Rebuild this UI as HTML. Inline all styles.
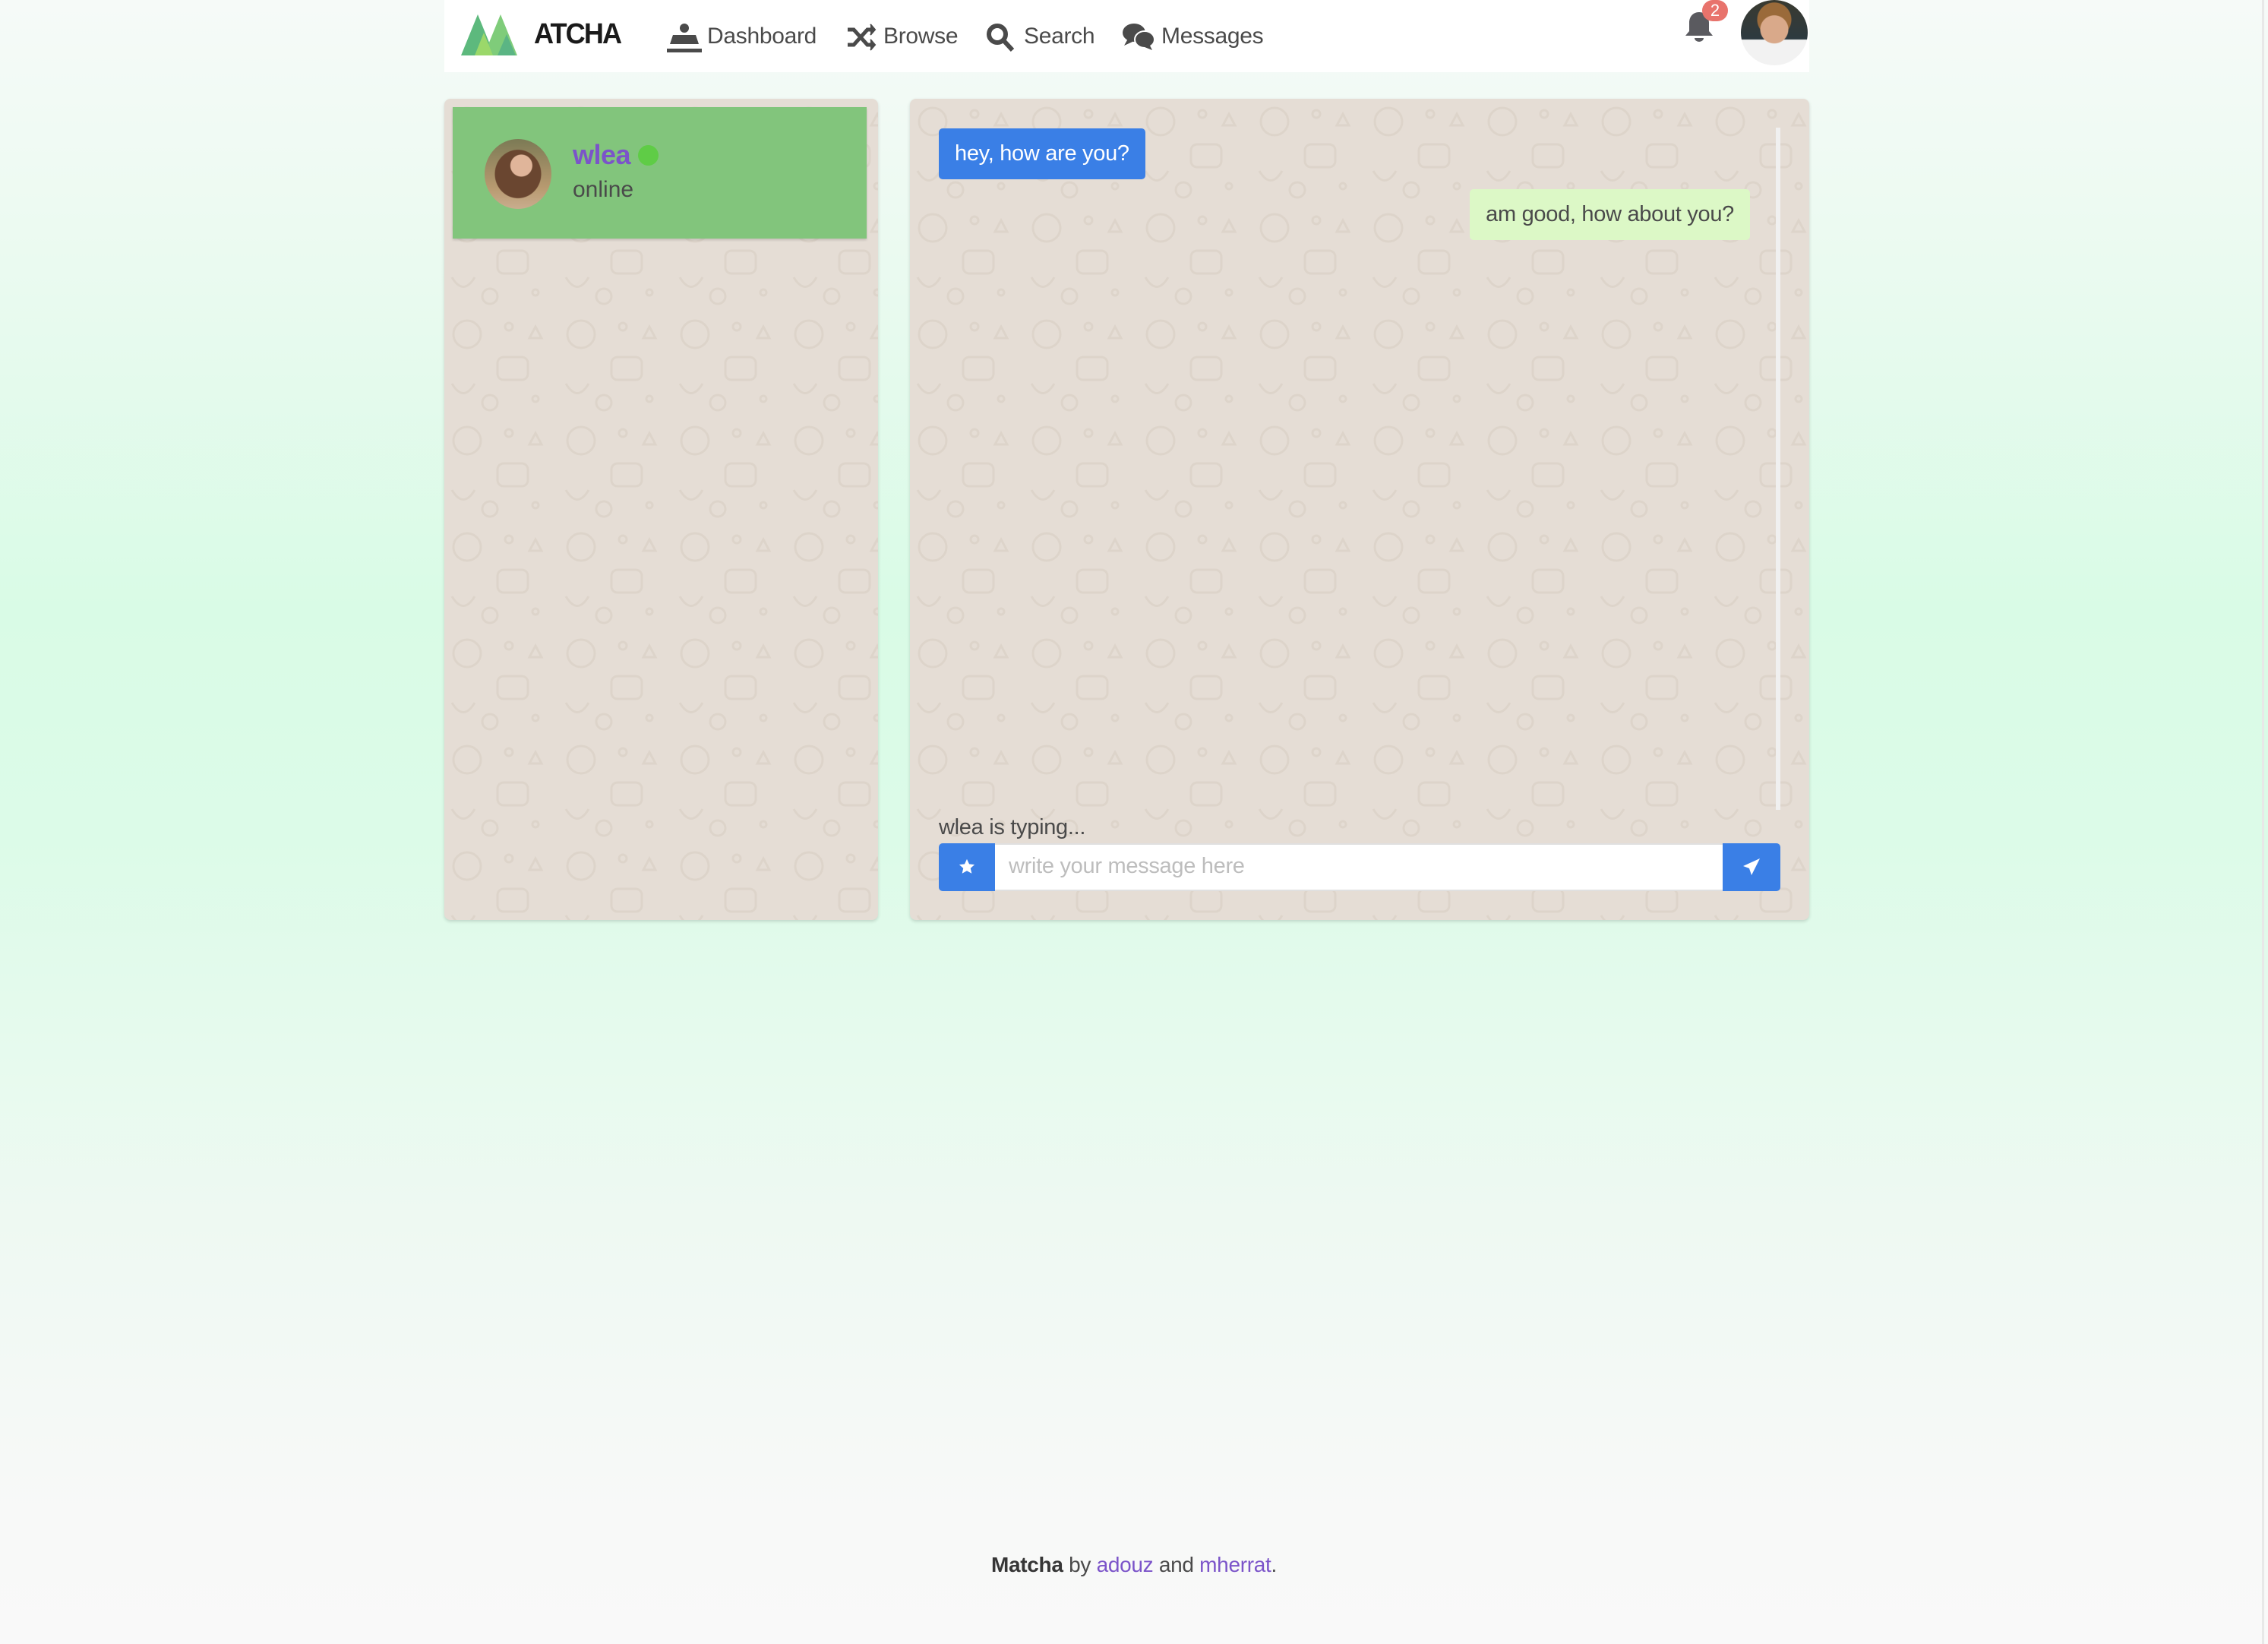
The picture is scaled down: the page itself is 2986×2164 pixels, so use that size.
<!DOCTYPE html>
<html><head><meta charset="utf-8">
<style>
*{margin:0;padding:0;box-sizing:border-box}
html,body{width:2986px;height:2164px;overflow:hidden}
body{font-family:"Liberation Sans",sans-serif;color:#4a4a4a;position:relative;
background:linear-gradient(180deg,#f6faf8 0px,#ecfaf1 300px,#d9fbe6 800px,#dcfbe8 1100px,#eef9f2 1600px,#f8f9f8 2000px,#f9f9f9 2164px);}
.nav{position:absolute;left:585px;top:0;width:1797px;height:95px;background:#fff}
.ni{position:absolute;top:28px;font-size:30px;color:#4a4a4a;line-height:40px;letter-spacing:-0.3px}
.ni svg{position:absolute;left:0;top:2px}
.panel{position:absolute;background-color:#e5ddd5;border-radius:8px;box-shadow:0 2px 4px rgba(0,0,0,.15);overflow:hidden}
.pat{position:absolute;inset:0;opacity:.35}
.card{position:absolute;left:11px;top:11px;width:545px;height:173px;background:#82c57c;box-shadow:0 2px 3px rgba(0,0,0,.15)}
.bub{position:absolute;height:67px;line-height:67px;font-size:29px;padding:0 21px;border-radius:5px;white-space:nowrap;letter-spacing:-0.3px}
</style></head><body>
<div class="nav">
  <svg style="position:absolute;left:22px;top:19px" width="100" height="54" viewBox="0 0 100 54">
    <polygon points="0,54 22,0 44,54" fill="#5db97d"/>
    <polygon points="30,54 52,0 74,54" fill="#7fcc7a"/>
    <polygon points="18,54 30,24 42,54" fill="#9bd86a"/>
    <polygon points="48,54 60,26 72,54" fill="#5bb584"/>
  </svg>
  <div style="position:absolute;left:118px;top:24px;font-size:38px;font-weight:bold;color:#1a1a1a;letter-spacing:-2px;transform:scaleX(0.95);transform-origin:left">ATCHA</div>
  <div class="ni" style="left:293px;padding-left:53px"><svg width="46" height="40" viewBox="0 0 46 40" fill="#4a4a4a"><circle cx="23" cy="7" r="6"/><path d="M8 16h30l4 12H4z"/><rect x="0" y="34" width="46" height="5"/></svg>Dashboard</div>
  <div class="ni" style="left:529px;padding-left:49px"><svg width="40" height="38" viewBox="0 0 40 38" fill="none" stroke="#4a4a4a" stroke-width="5"><path d="M2 9h8l18 20h8M2 29h8l18-20h8"/><path d="M32 2l6 7-6 7M32 22l6 7-6 7" fill="#4a4a4a" stroke-width="2"/></svg>Browse</div>
  <div class="ni" style="left:713px;padding-left:50px"><svg width="40" height="40" viewBox="0 0 40 40" fill="none" stroke="#4a4a4a" stroke-width="6"><circle cx="15" cy="15" r="11"/><path d="M23 23l12 13"/></svg>Search</div>
  <div class="ni" style="left:892px;padding-left:52px"><svg width="44" height="38" viewBox="0 0 44 38" fill="#4a4a4a"><ellipse cx="16" cy="13" rx="15" ry="12"/><path d="M3 30l5-9 6 4z"/><ellipse cx="30" cy="22" rx="13" ry="11" stroke="#fff" stroke-width="2"/><path d="M40 36l-4-8-6 4z"/></svg>Messages</div>
  <svg style="position:absolute;left:1632px;top:14px" width="40" height="44" viewBox="0 0 40 44" fill="#5a5a5f"><path d="M20 2c-8 0-13 6-13 14v11l-5 6h36l-5-6V16C33 8 28 2 20 2z"/><path d="M14 36h12a6 5 0 0 1-12 0z"/></svg>
  <div style="position:absolute;left:1656px;top:0;width:34px;height:28px;border-radius:14px;background:#e8736c;color:#fff;font-size:22px;text-align:center;line-height:28px">2</div>
  <div style="position:absolute;left:1707px;top:0;width:88px;height:86px;border-radius:50%;overflow:hidden;background:radial-gradient(circle at 50% 45%,#d9a98a 0 18px,transparent 19px),radial-gradient(circle at 50% 30%,#9a6a3a 0 22px,transparent 23px),linear-gradient(180deg,#3a3a30 0,#2d3a40 60%,#f2f2f2 61%)"></div>
</div>

<svg width="0" height="0" style="position:absolute"><defs><pattern id="p1" width="150" height="140" patternUnits="userSpaceOnUse"><g fill="none" stroke="#cfc4b8" stroke-width="3"><circle cx="30" cy="30" r="18"/><circle cx="85" cy="20" r="5"/><rect x="70" y="60" width="40" height="30" rx="8"/><path d="M10 95q15 25 30 0"/><circle cx="120" cy="115" r="4"/><path d="M120 20l8 15h-16z"/><circle cx="60" cy="120" r="10"/></g></pattern></defs></svg>

<div class="panel" style="left:585px;top:130px;width:571px;height:1081px">
  <svg class="pat" width="571" height="1081"><rect width="100%" height="100%" fill="url(#p1)"/></svg>
  <div class="card">
    <div style="position:absolute;left:42px;top:42px;width:88px;height:92px;border-radius:50%;overflow:hidden;background:radial-gradient(circle at 55% 38%,#e0b59a 0 14px,transparent 15px),radial-gradient(ellipse at 50% 50%,#6a4630 0 30px,transparent 31px),linear-gradient(180deg,#7c7a55,#b89a70 70%,#c9ad8e)"></div>
    <div style="position:absolute;left:158px;top:42px;font-size:36px;font-weight:bold;color:#7b54c9;letter-spacing:-0.5px">wlea <span style="display:inline-block;width:27px;height:27px;border-radius:50%;background:#5fcc46;vertical-align:-2px"></span></div>
    <div style="position:absolute;left:158px;top:92px;font-size:30px;color:#4a4a4a">online</div>
  </div>
</div>

<div class="panel" style="left:1198px;top:130px;width:1184px;height:1081px">
  <svg class="pat" width="1184" height="1081"><rect width="100%" height="100%" fill="url(#p1)"/></svg>
  <div class="bub" style="left:38px;top:39px;background:#3a7fe6;color:#fff">hey, how are you?</div>
  <div class="bub" style="right:78px;top:119px;background:#dcf8c6;color:#4a4a4a">am good, how about you?</div>
  <div style="position:absolute;left:1140px;top:38px;width:6px;height:898px;background:#f0f0f0"></div>
  <div style="position:absolute;left:38px;top:943px;font-size:29px;color:#4a4a4a;letter-spacing:-0.3px">wlea is typing...</div>
  <div style="position:absolute;left:38px;top:980px;width:1108px;height:63px;background:#fff;border:2px solid #e0e0e0;border-radius:5px">
    <div style="position:absolute;left:-2px;top:-2px;width:74px;height:63px;background:#3a7fe6;border-radius:5px 0 0 5px"><svg style="position:absolute;left:26px;top:20px" width="22" height="22" viewBox="0 0 24 24" fill="#fff"><path d="M12 1l3.3 7 7.7.8-5.8 5.2 1.7 7.6L12 17.7 5.1 21.6l1.7-7.6L1 8.8 8.7 8z"/></svg></div>
    <div style="position:absolute;left:16px;top:12px;font-size:29px;color:#bdbdbd;margin-left:74px;letter-spacing:-0.3px">write your message here</div>
    <div style="position:absolute;right:-2px;top:-2px;width:76px;height:63px;background:#3a7fe6;border-radius:0 5px 5px 0"><svg style="position:absolute;left:26px;top:19px" width="24" height="24" viewBox="0 0 24 24" fill="#fff"><path d="M23 1L1 11l8 3 3 9z"/></svg></div>
  </div>
</div>

<div style="position:absolute;left:0;width:2986px;top:2044px;text-align:center;font-size:28px;color:#4a4a4a;letter-spacing:-0.3px"><b style="color:#363636">Matcha</b> by <span style="color:#7b54c9">adouz</span> and <span style="color:#7b54c9">mherrat</span>.</div>
<div style="position:absolute;left:2978px;top:0;width:3px;height:2164px;background:#e8e8e8"></div>
</body></html>
